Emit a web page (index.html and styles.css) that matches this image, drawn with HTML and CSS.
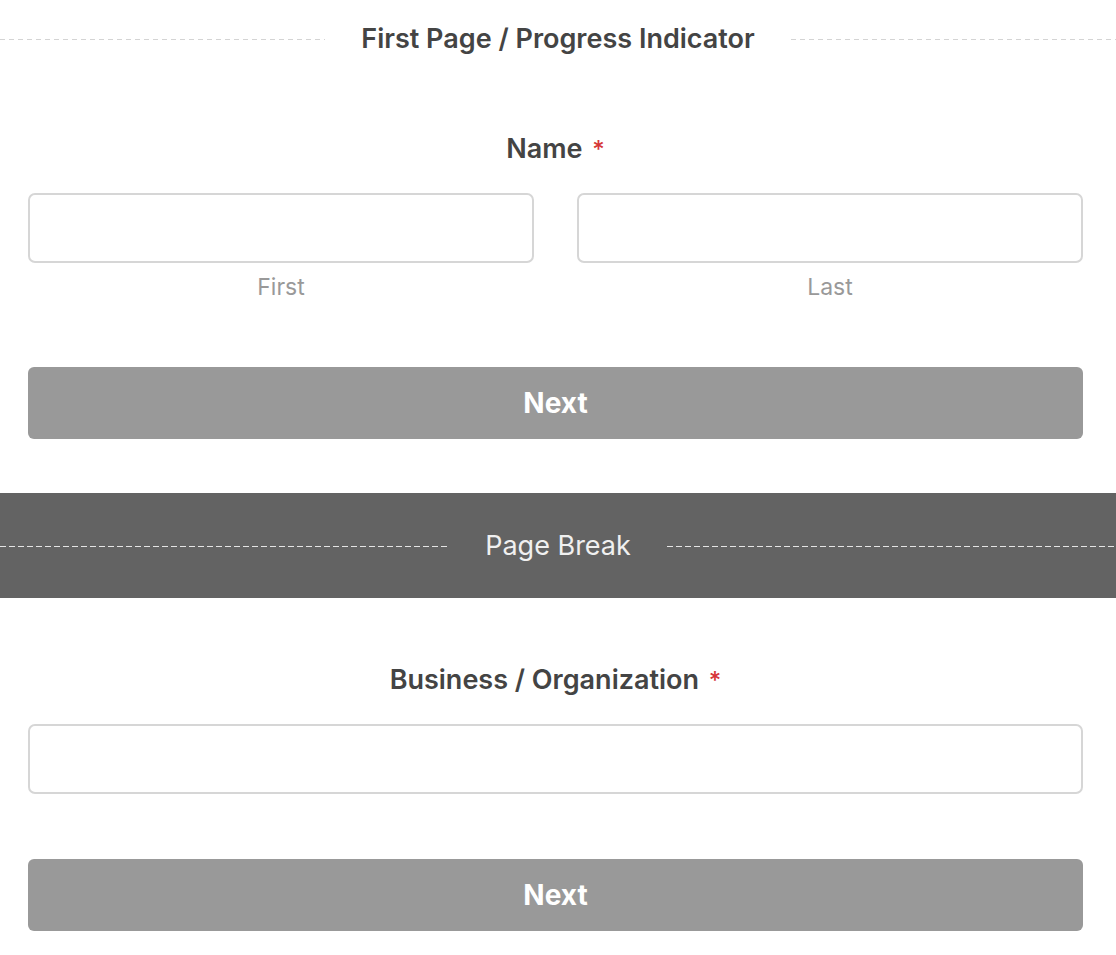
FILE: index.html
```html
<!DOCTYPE html>
<html lang="en">
<head>
    <meta charset="UTF-8">
    <meta name="viewport" content="width=device-width, initial-scale=1.0">
    <title>Form Preview</title>
    <link rel="stylesheet" href="styles.css">
</head>
<body>
    <div class="divider page-title">
        <span class="line"></span>
        <span class="divider-text">First Page / Progress Indicator</span>
        <span class="line"></span>
    </div>

    <div class="page page-first">
        <div class="field">
            <label class="field-label">Name <span class="required">*</span></label>
            <div class="row">
                <div class="col">
                    <input type="text" class="text-input">
                    <span class="sublabel">First</span>
                </div>
                <div class="col">
                    <input type="text" class="text-input">
                    <span class="sublabel">Last</span>
                </div>
            </div>
        </div>
        <button class="next-btn">Next</button>
    </div>

    <div class="divider page-break">
        <span class="line"></span>
        <span class="divider-text">Page Break</span>
        <span class="line"></span>
    </div>

    <div class="page page-second">
        <div class="field">
            <label class="field-label">Business / Organization <span class="required">*</span></label>
            <input type="text" class="text-input">
        </div>
        <button class="next-btn">Next</button>
    </div>
</body>
</html>
```

FILE: styles.css
```css
body {
    margin: 0;
    background-color: #fff;
    font-family: Inter, "Noto Sans", Arial, sans-serif;
    color: #444;
}
.divider {
    display: flex;
    align-items: center;
    gap: 36px;
}
.divider .line {
    flex: 1;
    height: 1px;
    margin-top: 3px;
    background-image: repeating-linear-gradient(to right, #d4d4d4 0 5px, transparent 5px 9px);
}
.divider-text {
    white-space: nowrap;
}
.page-title {
    height: 76px;
}
.page-title .divider-text {
    font-size: 27px;
    font-weight: 600;
    color: #444;
}
.page-break {
    height: 105px;
    background-color: #636363;
}
.page-break .line {
    margin-top: 2px;
    background-image: repeating-linear-gradient(to right, #e4e4e4 0 6px, transparent 6px 9px);
}
.page-break .divider-text {
    font-size: 27px;
    color: #f0f0f0;
}
.page {
    padding: 0 33px 0 28px;
}
.page-first {
    padding-top: 57px;
    padding-bottom: 54px;
}
.page-second {
    padding-top: 66px;
    padding-bottom: 24px;
}
.field-label {
    display: block;
    height: 32px;
    text-align: center;
    font-size: 27px;
    font-weight: 600;
    line-height: 32px;
    margin-bottom: 28px;
    color: #444;
}
.required {
    color: #d63638;
    font-weight: 500;
    font-size: 24px;
    line-height: 1;
    margin-left: 3px;
}
.row {
    display: flex;
    gap: 43px;
}
.col {
    flex: 1;
    display: flex;
    flex-direction: column;
}
.text-input {
    display: block;
    width: 100%;
    box-sizing: border-box;
    height: 70px;
    border: 2px solid #d6d6d6;
    border-radius: 7px;
    background: #fff;
    margin: 0;
}
.sublabel {
    text-align: center;
    margin-top: 12px;
    font-size: 23px;
    line-height: 24px;
    color: #999;
}
.next-btn {
    display: block;
    width: 100%;
    height: 72px;
    margin-top: 68px;
    border: none;
    border-radius: 6px;
    background-color: #999;
    color: #fff;
    font-family: inherit;
    font-size: 28px;
    font-weight: 700;
    cursor: pointer;
}
.page-second .next-btn {
    margin-top: 65px;
}
```
